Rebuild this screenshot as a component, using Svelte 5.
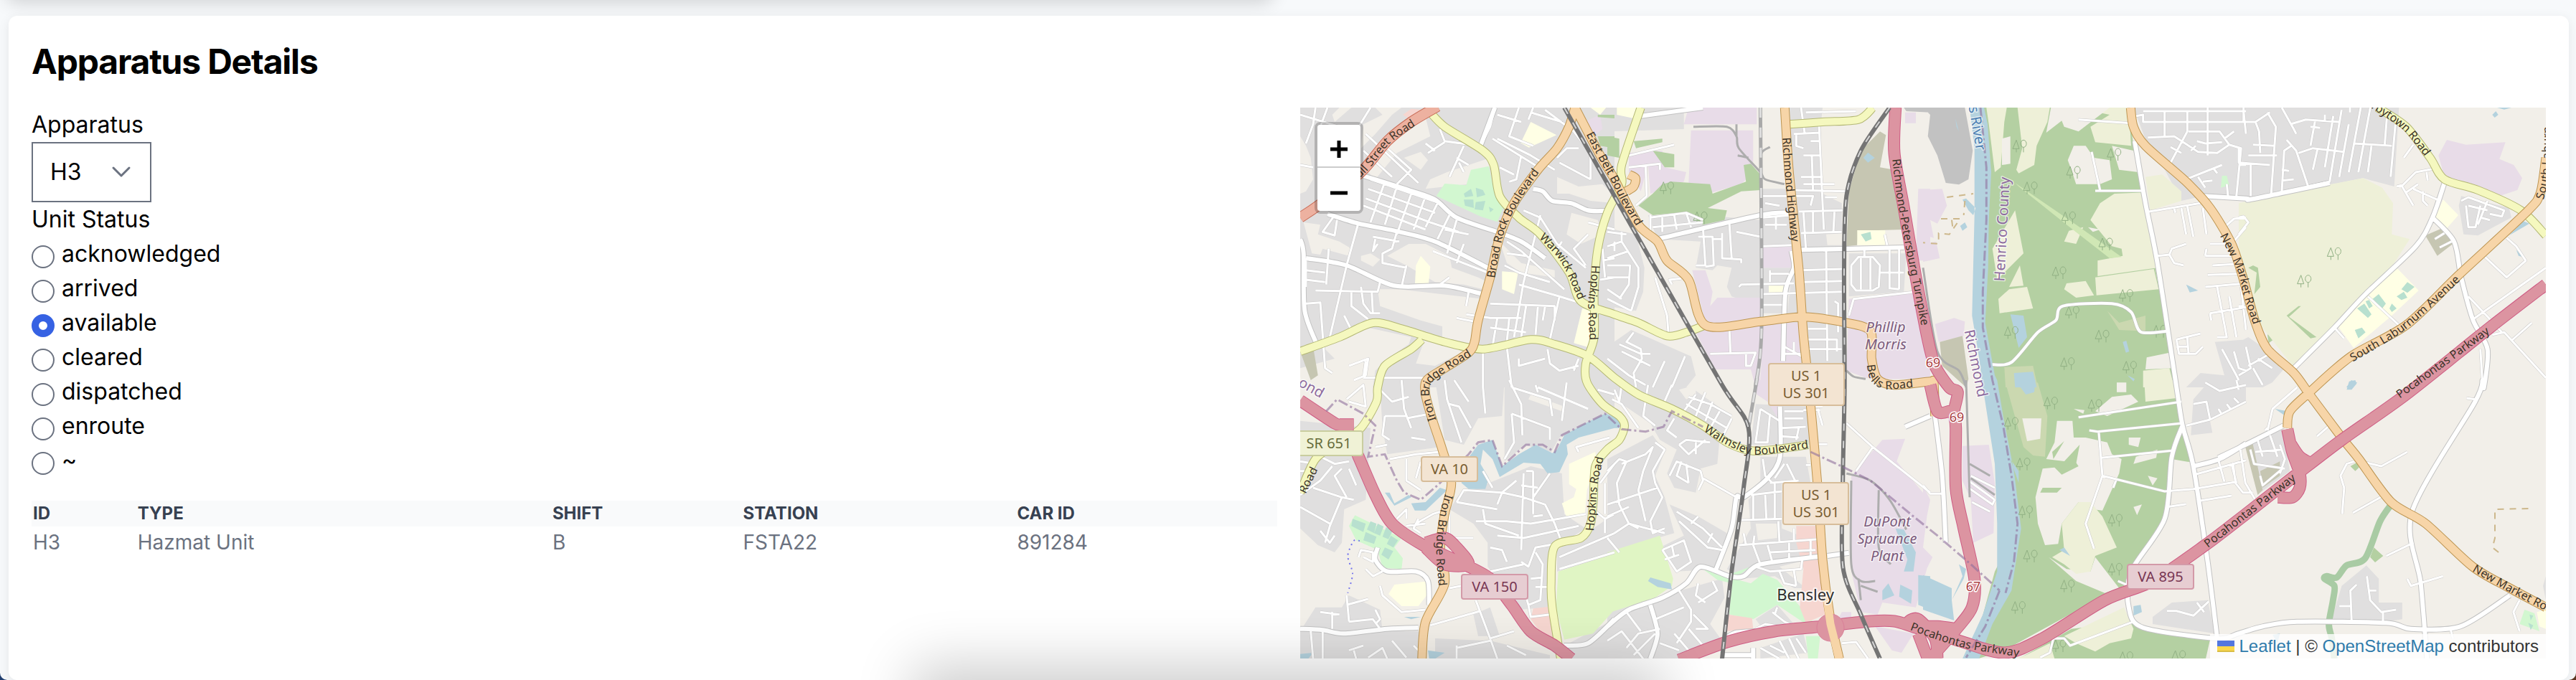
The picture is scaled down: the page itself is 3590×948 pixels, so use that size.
<script>
  const statuses = ['acknowledged', 'arrived', 'available', 'cleared', 'dispatched', 'enroute', '~'];
  const units = [{ id: 'H3', type: 'Hazmat Unit', shift: 'B', station: 'FSTA22', car: '891284' }];
  let apparatus = $state('H3');
  let status = $state('available');

  // The survey is split in eight sheets; each holds its origin and its scale.
  const sheets = {
    A: [1800, 140, 3], B: [2240, 140, 3], C: [2680, 140, 3], D: [3120, 140, 3],
    E: [1800, 530, 3], F: [2240, 530, 3], G: [2680, 530, 3], H: [3050, 530, 2.904]
  };

  function points(line, start) {
    let key = start;
    const list = [];
    for (const token of line.trim().split(/\s+/)) {
      if (sheets[token]) { key = token; continue; }
      const [x, y] = token.split(',').map(Number);
      const [ox, oy, sx] = sheets[key];
      list.push([ox + x / sx, oy + y / 3]);
    }
    return { list, key };
  }
  const f = (n) => n.toFixed(1);

  function trace(source, mode) {
    let key = 'A';
    let d = '';
    for (const line of source.split(';')) {
      if (!line.trim()) continue;
      const r = points(line, key);
      key = r.key;
      const p = r.list;
      d += `M${f(p[0][0])} ${f(p[0][1])}`;
      for (let i = 1; i < p.length; i++) {
        if (mode === 'curve') {
          const a = p[i - 2] ?? p[i - 1], b = p[i - 1], c = p[i], e = p[i + 1] ?? c;
          d += `C${f(b[0] + (c[0] - a[0]) / 7)} ${f(b[1] + (c[1] - a[1]) / 7)} ${f(c[0] - (e[0] - b[0]) / 7)} ${f(c[1] - (e[1] - b[1]) / 7)} ${f(c[0])} ${f(c[1])}`;
        } else d += `L${f(p[i][0])} ${f(p[i][1])}`;
      }
      if (mode === 'area') d += 'Z';
    }
    return d;
  }

  const areas = [
    ['#e0dfdf', `A 36,30 1350,30 1350,1200 36,1200;
      B 0,30 320,30 320,120 0,130; B 30,540 120,560 155,700 150,800 120,880 0,860 0,540; B 170,480 400,480 640,500 640,860 520,820 500,780 520,700 460,690 440,710 370,700 390,590 210,580;
      B 650,370 860,370 980,430 990,1100 730,1100 780,640 650,610; B 760,30 900,30 890,130 900,380 780,370; B 1010,640 1250,640 1240,800 1010,820; B 650,700 780,700 740,890 650,890;
      B 0,1030 100,960 350,1070 370,1150 330,1200 0,1200;
      C 880,30 1350,30 1350,400 1170,400 1080,420 1000,270 940,190; C 1220,1010 1350,1000 1350,1200 1100,1200 1160,1140 1260,1150;
      D 0,30 670,30 650,360 520,325 200,390 0,410; D 0,1010 40,990 140,1060 200,1110 140,1180 100,1200 0,1200; D 930,400 1130,450 1140,490 1000,565 940,560 920,440;
      E 36,170 330,200 310,500 220,540 210,680 180,720 110,690 36,620; E 370,30 530,0 600,190 620,280 400,310 380,200; E 600,0 890,0 880,150 780,160 720,270 640,250;
      E 890,0 1350,0 1350,170 1120,240 1080,310 980,270 890,340; E 700,480 1000,360 1130,390 1140,560 1230,620 1100,700 1070,950 950,960 820,780 820,680 760,600 660,540; E 100,950 210,950 240,900 370,960 380,1050 540,1050 540,1165 36,1165 36,1050; E 600,1080 830,1090 1080,1150 1080,1165 600,1165; E 1260,620 1350,560 1350,730 1110,800 1110,710; E 760,980 830,950 870,1070 780,1070; E 1160,1100 1350,1000 1350,1165 1140,1165;
      F 0,30 120,30 350,30 520,150 470,240 460,350 390,370 370,470 280,450 250,390 290,290 220,250 180,180 60,100; F 0,330 190,230 240,300 200,400 240,490 280,640 0,720; F 260,520 380,570 500,640 470,790 290,800 220,700 320,650; F 620,100 840,110 850,270 600,270; F 640,320 830,320 850,430 730,430 730,620 880,680 880,740 720,780 830,870 780,870 700,820 560,830 500,790 560,690 600,620 590,500 640,450; F 0,950 200,910 480,830 490,910 430,1020 480,1090 300,1165 0,1165; F 620,1000 710,940 780,1020 650,1040; F 640,1120 820,1060 840,1140 640,1165;
      G 1130,80 1200,0 1350,0 1350,90 1200,170 1210,220 1120,230; G 960,990 1040,930 1190,920 1220,1060 960,1020;
      H 240,260 380,200 410,380 290,470 260,380; H 580,1000 620,860 720,775 770,830 770,930 865,930 865,1000 800,1010; H 1435,860 1446,820 1446,920`],
    ['#f2efe9', `A 200,30 250,30 180,90 170,60; A 350,30 460,30 420,60 350,140 290,200 300,100 380,60; A 440,140 560,70 580,150 440,220 350,330 320,300; A 470,240 540,215 570,250 540,290;
      A 580,330 650,300 830,240 840,270 740,350 560,370; A 36,150 60,190 80,240 90,330 60,380 36,390; A 50,510 120,520 110,560 200,590 250,620 240,650 130,620 120,645 85,640; A 290,650 330,640 370,665 340,695 290,670;
      A 400,650 490,600 560,600 660,650 670,700 780,740 820,760 800,790 720,770 600,760 480,690; A 360,790 450,790 800,830 770,960 760,1020 630,990 630,945 540,920 370,860;
      A 120,1020 320,950 500,990 490,1020 400,1080 350,1130 340,1200 36,1200 36,1120 180,1080; A 560,990 750,1040 720,1050 600,1110 520,1100; A 870,590 960,680 1100,710 1100,740 960,720 900,680;
      A 1110,320 1200,360 1300,350 1350,400 1350,430 1250,420 1160,390 1110,390; A 1170,470 1280,500 1300,560 1210,600 1150,560;
      B 915,560 985,555 980,605 920,605; F 300,40 370,20 370,60 330,80; F 620,600 710,600 710,660 630,670; E 1000,60 1140,110 1130,130 990,80; D 270,520 310,420 380,430 330,500 290,540; D 0,480 60,440 110,500 80,550 40,520`],
    ['#e8dce8', `B 340,30 625,30 625,100 320,100; B 350,125 610,125 610,300 560,350 420,390 410,350 340,345; B 90,220 230,210 240,280 330,300 320,340 180,390 170,270 140,380 90,300; B 355,710 410,710 440,800 430,860 460,825 640,825 640,1200 620,1200 600,1125 450,1125 370,970 410,930; B 650,610 770,610 770,700 650,700; B 650,920 800,930 810,1100 640,1200; B 1010,830 1300,800 1350,1080 1350,1165 1140,1165 1080,1160 1000,1130; B 1300,370 1350,370 1350,670 1290,670; B 1245,50 1290,50 1290,95 1245,95; A 1200,100 1290,60 1300,120 1250,160;
      C 0,375 80,370 100,440 60,515 30,500 45,575 0,560; C 0,600 55,590 70,660 0,675; C 50,935 130,910 175,925 170,985 65,1010;
      D 870,165 950,185 1115,175 1090,245 1150,270 1185,325 1165,375 1090,400 860,320 835,230;
      F 620,0 720,0 720,170 670,90 625,60; F 1150,250 1245,245 1210,340 1345,500 1320,700 1350,740 1290,950 1150,930 1130,980 1060,970 1020,800 1020,400; F 980,970 1020,970 1020,1000 960,1010; F 1120,1030 1280,1060 1230,1140 1190,1130; G 165,275 275,270 300,430 295,640 210,680 200,500 165,420; G 0,440 30,500 0,650; G 0,700 40,740 0,820`],
    ['#b4d0a2', `B 270,340 430,350 440,390 580,340 570,270 600,265 640,310 640,375 560,380 420,450 500,460 490,500 400,520 350,480 290,470 190,480 130,440 190,390 230,350; B 110,170 230,160 230,175 120,200; B 190,210 280,225 280,280 240,280; A 1280,60 1350,60 1350,75 1280,70; A 1280,150 1350,150 1350,200 1290,190; B 0,150 50,160 50,240 0,230;
      C 250,30 860,30 880,190 1060,1200 G 1085,190 1130,345 1040,330 1010,590 870,800 860,850 760,900 340,1130 230,1165 200,1165 300,800 400,600 330,150 C 290,1200 250,920 260,100;
      D 625,470 625,560 500,635 420,645 270,780 210,740 240,700 300,660 340,660 370,600 410,630 480,630 465,595 510,540 600,500 600,470; D 400,755 430,770 450,735 450,790 500,820 340,950 290,890 330,850 325,820; D 100,680 120,660 110,620 135,605 150,665 120,685; D 120,980 140,965 160,990 125,1015; D 600,700 625,690 600,730; D 380,670 435,715 425,720;
      G 400,1165 620,1040 870,1010 920,1040 1200,1085 1182,1165; H 0,1060 70,1080 70,1165 0,1165; H 655,360 680,345 690,365 675,380; H 750,700 788,735 755,762 735,740`],
    ['#eef0d8', `C 265,30 350,30 340,90 325,280 300,300 275,100; C 395,30 530,30 520,90 475,190 465,270 400,305 390,290 415,200; C 640,30 860,30 870,190 720,175 700,110 780,60; C 740,430 800,390 930,385 980,700 730,735 730,670 835,650 830,620 790,610 700,500; C 720,740 965,705 985,790 725,815; C 385,460 420,640 310,750 290,620; C 405,690 420,775 360,780; C 315,830 360,790 435,780 460,870 320,890; C 590,790 600,765 680,755 715,815 640,825; C 920,1130 1030,1120 1050,1200 920,1200; C 610,545 670,530 640,600 590,590; C 930,320 1000,310 1080,380 1080,420 950,460;
      D 0,430 130,400 520,325 600,365 645,430 640,560 715,580 650,680 400,950 225,1110 60,900 0,640;
      G 925,0 1060,0 1060,75 930,90; G 590,1070 840,950 880,1040 870,1080 780,1100 720,1135 640,1100; G 430,1150 530,1100 550,1165 390,1165`],
    ['#f2efe9', `C 535,30 780,30 650,130 590,110 580,85 515,135; C 605,250 630,190 680,190 715,240 780,250 790,330 740,350 640,350 620,290; C 790,190 880,210 900,300 820,290; C 330,160 365,150 365,265 330,270; C 935,1075 1030,1055 1040,1120 930,1125; C 690,530 740,540 710,550;
      G 560,170 625,170 630,240 680,240 770,260 790,310 830,330 820,390 750,545 710,540 650,510 580,600 565,685 510,690 480,600 470,490 500,370 550,365 580,395 650,360 640,345 515,330 550,260; G 415,160 495,160 490,245 435,255; G 790,70 870,60 900,90 770,150 720,130; G 525,740 600,790 700,800 720,740 820,870 760,890 640,840; G 1040,480 1130,460 1180,700 900,770 1010,590; G 860,240 910,240 900,280 860,270; G 940,400 980,410 960,440; G 880,530 915,520 895,565; G 630,120 675,125 670,140; G 810,10 850,10 850,50 810,50; G 890,320 980,290 975,325 880,350`],
    ['#eef0d8', `G 580,600 650,510 700,510 750,570 810,700 720,735 700,800 640,810 590,770 540,740 590,710`],
    ['#b4d0a2', `G 540,300 590,255 545,330; G 590,340 655,270 640,350 590,360; G 500,450 580,450 560,470 490,470; D 250,860 260,860 210,905 325,990 300,995 200,900; D 60,690 80,700 90,780 65,810 75,720 40,700`],
    ['#d0e7b5', `C 385,345 640,520 830,655 780,660 600,520 400,360`],
    ['#cbd8b0', `G 350,30 480,10 520,150 510,320 460,315 420,280; C 340,1115 460,1110 480,1200 345,1200; C 770,880 820,930 930,900 930,965 820,960`],
    ['#f2efe9', `G 415,160 495,160 490,245 435,255`],
    ['#c6c6b2', `B 1060,210 1140,130 1165,145 1140,280 1200,290 1240,540 1050,545 1045,605 1000,610 1010,380; C 70,1010 165,985 190,1165 180,1200 80,1110; D 780,565 860,530 895,600 830,650; A 36,1050 90,1030 110,1150 80,1170; H 230,280 260,265 300,460 280,480; H 290,380 370,340 370,400 300,450`],
    ['#c2c2c2', `C 0,30 175,30 208,210 190,330 150,352 95,345 60,230 20,150 30,60; B 1240,30 1350,30 1350,50 1250,45`],
    ['#d2f7d0', `A 640,348 730,355 750,290 825,275 850,400 885,450 860,508 790,485 605,400; F 400,790 490,820 600,780 530,830 600,850 650,810 710,835 860,1010 830,1020 710,940 610,1000 510,980 520,850 460,835; F 830,1070 890,1070 880,1165 840,1165; C 1250,315 1270,315 1280,355 1245,365; E 265,565 460,660 430,700 465,745 460,790 380,785 360,710 270,670 240,610; H 1360,960 1400,975 1420,1050 1340,1020`],
    ['#e0f5c4', `E 1115,800 1350,725 1350,960 1260,1060 1140,1085 1105,950; F 0,720 220,650 275,830 270,860 200,910 0,975`],
    ['#b8e0cf', `A 770,365 800,375 810,395 775,405; A 720,390 750,370 760,400 725,405; A 720,415 760,415 762,450 725,440; A 770,425 810,420 800,460 765,455; A 825,445 845,455 830,468;
      B 1060,560 1100,550 1105,580 1080,590; D 680,790 705,760 735,780 705,805; D 495,870 525,850 555,895 540,910; D 530,840 545,835 560,860 545,870; D 560,830 585,810 615,850 600,870; D 660,820 690,800 705,825 680,835; D 630,870 640,850 660,870 640,885; D 485,960 515,950 530,970 500,995;
      E 255,580 310,600 300,635 250,610; E 330,590 355,600 345,640 315,625; E 360,600 385,612 370,650 345,640; E 395,615 425,625 405,665 380,655; E 310,635 355,655 345,685 300,670; E 415,650 445,670 425,700 398,685; E 390,700 425,715 405,750 375,730; H 1380,980 1395,985 1385,1005; H 1375,1015 1395,1025 1385,1045`],
    ['#ffffe5', `A 1000,90 1108,145 992,197 958,178; A 540,650 580,695 573,765 516,765 520,690; A 880,715 947,720 930,810 880,790; A 1215,870 1280,880 1250,1035 1180,1015; B 40,30 120,30 110,75 40,60; B 1045,543 1162,543 1162,605 1045,605; B 675,775 740,775 735,803 675,803; A 1250,30 1315,30 1290,60;
      D 855,415 918,480 870,535 820,490; D 660,700 752,795 640,900 480,1035 415,945 530,820; E 1160,350 1270,300 1275,340 1235,460 1225,570 1150,575 1130,515 1180,490 1190,455 1160,435; E 430,855 560,842 565,900 530,945 460,945 405,895; H 1410,970 1446,960 1446,1040 1420,1030`],
    ['#b8e0cf', `B 1060,560 1100,550 1105,580 1080,590; D 680,790 705,760 735,780 705,805; D 495,870 525,850 555,895 540,910; D 530,840 545,835 560,860 545,870; D 560,830 585,810 615,850 600,870; D 660,820 690,800 705,825 680,835; D 630,870 640,850 660,870 640,885; D 485,960 515,950 530,970 500,995`],
    ['#f6d6d0', `E 1010,955 1070,948 1110,1100 1060,1080 1000,1000; A 465,60 500,35 550,40 490,75; F 790,610 870,610 900,800 910,980 830,1015 805,950 820,790 790,680; F 505,980 605,995 610,1040 500,1050`],
    ['#b4d2de', `C 195,30 215,200 215,480 205,900 235,1080 250,1200 G 255,60 300,350 310,600 310,800 250,980 165,1165 235,1165 290,1020 370,880 410,620 380,380 335,150 310,0 C 300,1150 260,930 272,700 275,500 285,300 270,100 255,30;
      C 165,415 180,410 220,450 210,480 190,460; C 155,525 175,510 185,530 165,545; C 365,895 420,900 435,990 400,1035; C 380,1140 460,1135 475,1200 385,1200; C 835,1010 850,1005 862,1050 848,1055; C 855,1150 885,1165 880,1175; C 1100,770 1150,795 1115,803; B 1070,240 1090,218 1118,240 1090,260; C 135,75 150,130 140,110;
      D 1130,565 1190,505 1215,515; D 1160,625 1188,655 1170,650; D 450,1200 470,1170 495,1180 480,1200; D 1060,60 1075,45 1085,60 1070,72; D 1080,30 1140,30 1110,38;
      E 735,330 780,270 840,250 880,360 950,310 1020,270 1090,305 1110,290 1140,230 1230,180 1310,140 1380,160 F 60,170 50,200 E 1350,200 1200,240 1150,270 1155,310 1120,385 1070,390 1040,350 970,345 870,405 840,330 800,290 790,350 825,410 810,455 740,455 710,430; E 500,515 560,510 620,450 650,460 560,545 515,545; E 390,470 430,525 500,490 490,480 430,515 410,470; E 470,990 540,990 500,1000; E 570,1130 640,1140 600,1165 575,1165; E 36,1145 90,1140 70,1165 36,1165;
      F 170,840 180,825 265,850 270,875 210,865; F 1205,620 1240,625 1290,720 1280,800 1240,800 1255,750; F 1150,880 1175,850 1200,900 1150,920; F 1225,855 1275,880 1270,935 1220,905; F 1300,815 1350,820 1350,960 1300,940; G 0,815 120,870 120,920 130,1005 0,960; G 120,920 165,820 150,770 180,790 170,830; G 385,0 470,0 465,50 430,60; G 365,330 400,380 400,430; G 570,710 590,700 615,735; G 880,945 910,940 915,970 880,985;
      H 350,120 400,130 385,145; H 640,40 650,5 675,0 680,15 660,40; H 340,1065 370,1060 360,1100`]
  ].map(([fill, src]) => ({ fill, d: trace(src, 'area') }));

  const streets = trace(`A 60,180 90,100 100,30; A 36,60 200,110; A 150,30 120,110; A 250,160 330,30; A 300,210 420,320; A 310,140 530,345; A 400,200 500,290 440,350; A 36,270 90,280;
    A 620,120 640,170 780,190; A 560,180 600,210; A 640,175 570,220; A 720,190 660,320; A 690,240 740,270; A 700,260 720,300; A 850,30 830,110 790,190; A 860,60 960,90; A 950,30 910,150 1010,190; A 1010,30 990,80; A 860,160 1000,230 1100,290; A 1000,50 1130,90; A 1060,40 1180,130 1250,220 1250,330; A 840,160 1050,290; A 1110,240 1150,200 1200,200; A 1120,260 1250,330; A 960,230 940,330 910,340; A 870,280 930,310;
    A 260,340 230,400; A 330,330 620,430; A 320,370 600,470; A 310,410 580,510; A 300,440 560,540; A 390,340 330,510; A 440,360 390,520; A 500,390 440,560; A 560,400 510,540; A 610,430 560,530; A 660,480 610,580; A 690,500 650,640; A 720,600 690,680; A 640,540 740,560; A 590,630 820,720; A 580,510 700,550;
    A 280,510 230,690 160,990; A 180,480 130,550 180,565 190,500; A 340,570 450,590; A 350,580 340,630 360,600; A 440,550 420,620 380,640 380,680 480,700; A 480,690 460,780; A 60,670 60,780; A 60,710 140,720; A 60,750 140,760; A 155,620 145,770; A 100,795 360,800 370,760; A 250,800 250,860 320,915; A 290,780 300,850 330,890 370,890; A 335,800 340,890; A 60,850 120,845 140,1120 170,1140; A 220,900 250,960; A 620,770 660,740;
    A 900,590 960,630 1140,790; A 1040,480 970,760 930,990; A 970,460 1040,490 1110,600 1230,700; A 900,640 980,650; A 890,690 950,720 1080,760; A 950,770 1120,820 1250,860; A 830,850 1100,860 1100,920; A 820,910 960,910; A 830,950 980,970; A 860,910 840,1030; A 910,910 900,1010; A 980,860 960,990; A 1030,860 1020,980; A 1060,860 1050,920; A 1120,820 1080,1000; A 740,800 730,860; A 690,910 790,930; A 730,895 830,910; A 1130,590 1100,640; A 1240,560 1180,620 1230,690; A 1300,670 1350,660; A 1290,750 1350,740; A 1240,510 1350,540; A 1300,620 1310,740;
    A 300,1160 600,1160; A 310,1090 300,1160; A 240,1110 320,1080 310,1150 E 260,0; A 900,1030 920,1200; A 950,1080 950,1110 1060,1080; A 1070,1040 1080,1100 1120,1130 1200,1110; A 1180,1130 1200,1080; A 800,1050 800,1200 E 810,140; E 910,0 960,100 965,230;
    B 180,480 180,560; B 180,490 330,470 400,500; B 230,480 230,550; B 280,480 290,540; B 330,470 350,530; B 190,530 400,510; B 400,530 410,690 370,690; B 380,570 440,570 445,690 410,695; B 510,510 520,660; B 480,555 480,660 560,665 560,680; B 540,550 640,570; B 445,580 480,580; B 550,780 560,770 780,765; B 510,950 515,1060; B 430,1060 620,1055 600,1110 580,1110 580,1060; B 90,230 280,185; B 90,280 220,265 220,290; B 160,270 165,400 120,440; B 200,740 250,900 255,970; B 270,770 260,750 310,745;
    B 650,400 860,400 850,440; B 660,430 720,440; B 650,490 770,480; B 660,520 750,520; B 705,490 705,540; B 650,810 980,800; B 650,855 730,855; B 680,710 680,760; B 680,725 760,725;
    B 780,140 890,135; B 790,140 790,190 820,200; B 810,30 825,135; B 885,100 905,540; B 850,170 890,170; B 820,230 895,230; B 855,230 860,380; B 810,320 900,320; B 780,375 1000,380; B 820,350 950,350; B 910,405 960,405; B 800,465 985,460; B 820,465 830,620; B 860,465 860,550; B 950,460 945,550; B 810,555 980,550; B 915,630 920,1090; B 810,710 985,705; B 810,760 985,755; B 830,1000 960,1000 960,1050; B 830,1040 980,1040; B 840,955 920,955; B 740,1030 830,1080; B 740,1060 810,1060; B 780,1010 780,1060; B 950,840 965,850 965,970; B 830,50 1040,45;
    B 1020,690 1050,655 1110,655 1140,690 1135,780 1110,795 1040,795 1020,770 1020,690; B 1060,660 1060,790; B 1100,660 1100,790; B 1075,625 1075,655; B 1180,625 1180,790; B 1140,720 1240,720; B 1220,620 1220,790; B 1180,785 1220,790; B 1160,560 1170,605; B 1010,900 1030,830 1290,800; B 650,610 770,605;
    B 0,610 60,590; B 0,550 80,560; B 60,550 60,590 130,700 130,780 100,880; B 0,660 90,630; B 30,590 30,630; B 0,690 95,690 90,770 50,830; B 0,740 90,740; B 0,790 60,830; B 0,830 100,880;
    B 50,1020 140,1060 180,1060; B 60,1050 180,1110; B 110,970 80,1010 140,1040 145,1080 110,1140 120,1200; B 0,1080 90,1150 160,1190; B 240,1090 190,1200; B 325,1070 270,1200;
    F 20,80 60,100 130,200; F 60,20 50,90 30,40; F 170,20 150,150 200,190; F 270,20 230,110; F 370,60 320,130; F 340,70 430,100 520,150; F 410,50 370,150; F 440,90 410,170; F 470,130 430,200; F 330,100 500,200; F 520,160 470,260; F 280,160 250,210 290,240; F 300,270 330,250 430,260; F 300,270 340,310 410,250; F 370,250 370,310; F 260,400 290,340 390,380 400,420 380,460; F 310,340 290,400 340,430; F 330,350 340,430; F 400,410 540,490;
    F 0,380 50,330 80,340 40,430 50,520 90,600; F 60,350 160,310 190,280 150,380 130,460 160,590; F 200,260 240,290 190,380 200,430 230,490 180,590 190,640 240,620; F 0,520 210,450; F 0,570 90,530; F 90,600 240,640; F 0,660 50,720; F 30,640 90,600 130,620;
    F 290,550 400,620 480,700; F 350,600 380,570; F 300,590 420,700 480,710; F 420,680 440,640; F 230,710 320,670 350,760 290,800 230,710; F 240,750 300,730; F 270,690 280,740;
    F 80,970 140,1050; F 0,1090 60,1050 150,1165; F 300,880 350,960 350,1010 290,1100; F 380,850 370,900 410,930; F 380,930 460,880 440,840; F 360,980 420,1040 370,1040; F 200,1000 320,950; F 80,1120 130,1060 220,1040; F 110,1150 200,1060; F 220,1100 300,1130; F 280,1060 340,1130; F 340,1040 400,1110;
    F 640,120 720,170; F 640,120 620,260 670,260 680,140; F 740,130 820,130; F 740,160 820,160; F 730,200 830,195; F 800,200 790,250; F 730,235 800,240; F 650,330 660,400 690,430; F 750,350 790,430; F 740,350 700,410; F 680,430 800,420; F 600,480 730,465; F 610,480 610,580; F 660,480 665,580; F 700,430 700,580; F 560,585 730,580; F 550,690 880,665; F 570,640 580,690; F 615,650 610,690; F 715,590 720,680; F 780,620 780,670; F 610,690 640,770; F 670,690 690,760; F 760,680 760,750; F 850,670 850,740; F 680,720 870,710; F 620,780 680,800 810,790 815,750; F 720,800 740,850 790,860; F 780,795 790,860; F 690,970 740,1010 780,1030; F 710,950 700,980; F 620,1040 660,1020 720,1030; F 640,1120 720,1165; F 680,1110 740,1140; F 720,1090 760,1165; F 760,1080 800,1165; F 790,1080 830,1140; F 880,120 900,190; F 820,125 890,125; F 860,268 920,268; F 870,110 900,110; F 830,355 850,355; F 980,1100 1040,1095 1090,1165; F 1000,180 1110,280 1350,470; F 1110,280 1040,380;
    E 230,80 300,20 310,110 240,90; E 460,0 470,120 500,200; E 370,40 420,90 490,70; E 480,160 580,140; E 390,150 380,230 410,250; E 390,150 480,150; E 500,240 560,250; E 350,280 400,270; E 640,0 650,80 710,260; E 680,0 740,90; E 660,100 700,110 750,200; E 920,30 1080,80 1090,150; E 920,140 1080,200 1080,250; E 1020,20 1030,50; E 1030,30 1240,120; E 1150,10 1130,170; E 1280,40 1350,60; E 890,330 930,260 920,140; E 410,330 520,310 620,300; E 480,330 480,420 540,460; E 540,340 520,410; E 1200,300 1190,280 1330,240;
    E 800,380 840,450; E 690,510 720,460 880,470 970,490 1060,520 1100,600 1130,680; E 860,520 880,470 940,420; E 970,390 960,710; E 1010,380 1010,560; E 980,380 1010,380; E 1080,390 1010,490; E 770,590 900,590 1000,600 1230,560; E 800,540 810,600 950,650; E 860,650 970,660 1200,610; E 690,510 860,540; E 660,560 660,660 760,660; E 1010,570 1050,565; E 960,440 1030,450; E 830,700 880,710 900,760; E 830,800 970,770; E 960,760 990,780 1020,700 1130,680; E 970,870 990,940 1000,990 1080,980; E 1020,720 1050,770 1040,920 990,940; E 1000,830 1050,825; E 1020,865 1080,865; E 1120,740 1350,640; E 1120,790 1350,720; E 1260,540 1310,580 1310,640; E 1310,580 1350,560; E 1290,430 1350,350; E 1310,430 1310,560;
    E 36,340 100,350; E 36,380 90,380; E 120,320 180,350 240,340; E 170,360 120,420 36,480; E 90,450 210,490 260,500; E 210,370 180,400 230,490; E 240,370 270,440; E 36,530 160,600; E 120,630 160,680 180,650; E 210,490 160,610 140,680;
    E 280,740 290,710 340,720 340,760 300,740; E 310,790 340,820 380,800; E 370,860 380,900 460,970 560,960; E 520,600 590,560 620,550; E 440,580 480,540 480,580; E 480,610 560,600; E 530,580 510,620 540,640; E 660,870 710,860;
    E 230,900 240,1010; E 230,940 320,915; E 120,970 200,980; E 170,970 170,1040; E 240,1010 340,1000 370,1040; E 350,960 370,1000 350,1020; E 770,920 830,1080 860,1165; E 580,1025 790,965; E 830,1080 930,1050; E 690,1120 830,1090; E 80,1050 90,1165; E 130,1050 130,1165; E 240,1130 300,1110; E 260,1130 270,1165; E 320,1160 380,1120 400,1165; E 420,1090 480,1160; E 690,1110 690,1165; E 900,1110 980,1150; E 510,1110 530,1130;
    C 920,45 1350,45; C 890,65 920,60 920,90 1350,90; C 1010,45 1010,150; C 1105,45 1105,130 1030,270; C 1190,30 1190,230; C 1340,45 1350,140; C 940,155 1050,150 1150,215 1230,220 1280,185 1240,130 1110,130; C 1035,195 1080,220; C 1120,210 1140,190; C 1145,170 1180,180 1250,175; C 1260,160 1300,130; C 1280,185 1330,200 1310,400; C 1320,270 1350,270; C 1100,330 1250,270; C 1150,320 1180,365; C 1170,340 1210,335; C 1215,285 1230,305; C 1270,350 1275,400;
    C 650,80 870,95; C 705,215 740,375; C 720,378 920,378; C 945,465 1160,430; C 1050,450 1055,470; C 1080,450 1100,560; C 1105,440 1130,570; C 1170,450 1185,560; C 980,650 1030,645 1040,620 1100,600; C 1030,645 1050,680 1090,690; C 1260,530 1300,495 1350,490; C 1350,530 1290,600; C 1200,600 1270,600; C 1180,650 1290,650; C 1185,620 1180,650; C 1210,690 1300,685; C 1190,730 1320,725; C 1180,780 1350,765; C 1230,780 1270,990 1230,990; C 1280,820 1310,990; C 1200,890 1350,865; C 1200,890 1205,920; C 1060,1000 1160,975; C 1060,1000 1070,1060 1140,1060 1170,1030; C 1105,990 1110,1060; C 1060,1030 1110,1030; C 1250,1040 1310,1150 1320,1170; C 1300,1050 1320,1120 1350,1130;
    D 20,30 20,90; D 0,90 70,90 85,130 90,220; D 70,90 130,50; D 120,50 155,110 135,400; D 0,200 0,260 130,270; D 50,270 50,400; D 60,185 150,190; D 40,230 160,230; D 180,30 230,120 240,140; D 215,100 280,80 420,90; D 320,80 300,190; D 300,110 340,115; D 360,60 360,90; D 200,165 240,210 290,360; D 180,380 190,210 220,190; D 250,220 310,200 440,215; D 395,65 360,280; D 430,40 380,340 290,360; D 330,200 310,290; D 460,100 420,320; D 510,30 460,300; D 550,30 500,300; D 555,190 540,300; D 620,60 610,190; D 655,100 635,320; D 480,180 640,190; D 465,30 465,50; D 180,335 230,330; D 180,290 210,295;
    D 660,360 680,355 730,440; D 680,360 740,300 820,285; D 700,385 750,350; D 730,370 830,415; D 770,380 770,420 790,440; D 785,300 790,335; D 730,185 690,240; D 930,420 960,405 1110,460 1100,485 1050,475; D 950,440 960,530 990,530 1010,440; D 1040,420 1000,520; D 960,440 1040,460; D 1010,490 1050,500; D 820,580 860,555; D 840,615 890,590; D 540,820 670,940; D 400,950 440,995; D 1120,575 1160,610 1200,670 1120,740 1030,655; D 960,820 1050,915 1100,970; D 980,915 1284,700; D 1060,980 1110,970 1284,1160; D 1140,1005 1225,930; D 1010,1040 1020,1200; D 0,490 20,485 40,510 0,560; D 0,860 20,860; D 10,780 30,960;
    D 30,1030 50,1120 0,1150; D 80,1080 140,1120; D 130,1060 40,1110; D 60,1120 100,1190;
    G 0,440 30,475 80,475; G 650,155 1080,90; G 695,210 730,215 1085,180; G 735,220 750,400 680,600 715,705; G 745,325 1040,295; G 750,400 1010,465 1130,455; G 810,410 795,450; G 1020,530 1100,518; G 765,905 860,860 815,840; G 1135,395 1350,335; G 1130,455 1310,425; G 1155,505 1290,483; G 1235,335 1260,425; G 1290,350 1310,430; G 1100,190 1200,165 1350,90; G 1130,100 1185,90 1200,165; G 1235,120 1250,145; G 1270,100 1285,120; G 1300,75 1320,95; G 1180,10 1240,45 1350,20; G 1310,0 1320,40; G 880,1010 615,1110 590,1080 545,1080 530,1140 490,1160; G 1020,965 1060,965 1130,985 1195,925; G 1145,930 1175,970;
    G 190,420 300,500; G 190,450 290,520 300,500; G 200,400 300,450; G 205,510 280,550;
    H 320,210 340,120 440,30; H 210,290 230,430 270,500; H 250,290 265,350 390,370; H 280,250 300,320; H 330,230 360,320; H 370,270 390,330 370,390; H 290,400 300,440 380,370; H 270,300 380,290; H 310,210 320,200; H 180,345 190,430 220,470 260,470; H 520,235 570,190; H 670,340 640,350 615,400 630,450 622,560; H 700,340 780,360 850,320 885,300; H 665,555 785,485; H 800,735 910,680; H 1125,75 1160,80; H 885,830 900,860 1030,820; H 680,855 655,880 660,1010; H 610,945 655,945; H 722,820 735,920 780,970 840,960; H 730,880 760,880; H 787,970 787,1010; H 1340,920 1315,970 1340,1050; H 1060,1040 1070,1080`, 'line');

  const minor = trace(`A 36,580 50,640 55,880 110,1030; A 60,660 230,690 430,775 640,775 800,810; A 150,475 280,515 430,545 600,590 820,700; A 300,315 490,375 600,415 690,490 860,550; A 1010,370 1050,380 1090,420 1170,430 1240,460 1310,462; A 850,30 790,190; A 860,550 960,590 1060,660;
    B 140,65 400,30; B 210,580 640,480 770,470; B 810,625 1240,615; B 770,630 780,700 745,800 735,1090; F 722,110 722,320 670,410 570,490 540,490 520,620 455,790; F 0,1030 90,960 230,910 330,850 390,780 510,820 570,820 640,770 880,738; F 180,940 210,1060 180,1165; F 500,1075 540,1055 620,1050; F 480,1150 610,1150; F 610,1120 610,1165; F 920,735 1010,722; F 1245,195 1350,150; E 36,1040 130,1045 220,1060 400,1040 530,1035; E 360,700 350,750 400,800 520,800 570,840 575,940; E 1140,1110 1240,1100 1350,1000; F 30,1000 0,1030;
    C 885,170 930,430 980,680 1060,1200 G 1085,190 1130,360 1190,760 1230,1080; G 1085,190 1040,320 1010,580 870,800 860,950 920,1035 1230,1080 H 200,1060 300,1030 440,1010 800,1015 900,1040 1100,1030 1300,900; C 1170,400 1350,410 D 60,412 380,345; G 50,150 80,400 95,680; G 1130,360 1240,330 1350,265; H 120,325 250,260 385,190;
    D 860,345 810,490 740,610 530,810 400,950 225,1125; D 810,490 900,590 930,740 980,920 1040,1040 1025,1200 H 1190,0 1160,90 905,550 940,850 965,1165`, 'curve');

  const lane = trace(`C 290,1105 370,1095 480,970 555,920 585,860 790,850 870,885 910,968 1020,965`, 'curve');

  const roads = [
    { fill: '#f5f8bf', edge: '#b3b774', w: 10, d: trace(`A 36,1050 200,990 340,930 460,955 640,1010 800,1040 1000,1000 1100,1020 1240,1070 1350,1160 F 130,60 270,120 400,190 500,260 600,295 700,290 840,270;
      A 580,50 640,110 800,210 845,270 870,400 950,490 1040,560 1160,720 1210,840 1350,895 B 130,930 250,985 330,970 410,940; B 140,30 60,270 60,350 0,470 A 1280,620 1265,800 1265,990 1230,1100 E 1235,10 1300,100 F 50,150 72,190 50,250 0,290 E 1270,360 1262,500 1250,600 1210,660 1100,695 1085,850 1090,950 1125,1165;
      A 545,1000 500,1040 390,1110 360,1200 E 355,90 290,200 200,260 100,330 36,470; B 760,100 900,90 1050,80 1110,30; D 580,30 700,110 800,240 860,330 1000,375 1180,460 1284,565`, 'curve') },
    { fill: '#f7d5a8', edge: '#bd9552', w: 11, d: trace(`A 1185,30 1160,110 1110,200 1030,290 930,430 870,570 830,740 780,920 765,1010 740,1055 640,1120 565,1170 E 560,60 590,170 630,290 668,430 640,560 622,700 640,850 560,1010 545,1165;
      A 1185,30 1290,230 B 30,330 130,520 210,590 250,670 340,750 410,940 640,925 820,905 1000,930 1100,965 1105,1080 1130,1165 1200,1190 1350,1175 C 35,1180 G 45,10 50,150; B 90,310 118,325 110,360 80,380;
      B 742,30 760,300 800,700 820,980 F 845,50 880,450 900,750 930,980 970,1165; C 868,30 880,110 930,190 1100,340 1200,450 1290,600 D 20,750 70,930 120,1040 230,1140 H 490,60 620,240 690,330 820,510 960,600 1150,780 1300,870 1446,950;
      H 400,200 410,130 490,50 D 470,1070 700,940 920,730 1200,470 1260,390 1284,240`, 'curve') },
    { fill: '#edb1a0', edge: '#c76a55', w: 13, d: trace(`A 36,490 110,440 290,300 400,170 500,90 610,25`, 'curve') },
    { fill: '#dc94a1', edge: '#ce5c84', w: 15, d: trace(`E 36,85 180,180 225,200 280,320 350,480 420,600 550,690 700,760 830,830 920,940 1000,1050 1100,1110 1170,1165; E 200,185 260,185; F 300,1170 500,1095 700,1050 900,1030 1100,1008 1200,1008 1290,1035 G 150,1090 340,1140 500,1080 760,920 960,840 1180,690 H 232,560 430,400 620,250 880,60 D 1050,950 1284,770;
      B 1205,30 1200,220 1240,450 1290,740 1340,1000 C 50,1110 110,1200 G 145,50 130,130 137,200 137,450 170,620 215,830 205,950 140,1040 30,1165;
      E 560,680 640,660 690,700 740,770 640,770 560,700; H 400,205 420,300 450,390 450,450 420,490 360,490; H 410,260 450,320 500,350; F 1290,1035 1260,1010 1300,1000 G 50,1080 60,1165; G 30,20 60,130 110,130; G 0,1030 60,1030 140,1040; F 1300,1060 1340,1165`, 'curve') }
  ];

  const rails = trace(`A 1140,30 1350,400 B 200,700 480,1190 F 590,200 570,450 520,800 480,1165; B 1180,30 1060,210 1000,400 990,700 992,1190 F 985,400 985,780 1060,980 1140,1165`, 'curve');
  const branch = trace(`B 640,30 645,950 620,1190 F 625,0 590,200`, 'curve');
  const sidings = trace(`B 360,110 500,110 540,150 550,200 640,300 660,330 740,350; B 540,100 540,150; B 545,230 590,240; B 680,195 645,220 640,300; F 1000,390 1100,420 1180,500 1250,625; F 1135,460 1135,700 1185,770; F 1020,420 1020,770 1060,840 1120,840; F 1050,830 1060,920; F 1060,860 1130,885; B 1000,1130 1030,1155 1080,1165; G 180,0 195,490; G 195,350 280,400; G 200,410 300,480; C 0,700 60,1050 150,1130 180,1200`, 'curve');
  const borders = trace(`C 240,30 265,280 265,500 250,800 250,950 290,1170 G 335,190 370,400 395,600 380,760 345,890; G 320,880 260,1030 180,1160; F 850,300 1000,370 1100,420 1280,570 G 60,650 200,770 320,880; E 145,130 190,80 300,140 350,190 320,320 390,310 440,420 470,470 540,500 610,440 740,310 780,260 840,250 880,360 980,270 1050,270 1100,300 1130,230 1310,140 F 60,205 160,215 235,195 270,130 400,195`, 'line');
  const tracks = trace(`H 1375,537 1240,540 1240,660 1230,700 1255,720 1275,715; C 100,405 210,390; C 75,495 155,495 110,560 65,555 65,600 0,595; C 120,500 125,540; C 175,420 170,480`, 'line');
  const greenway = trace(`H 820,520 775,590 715,745 640,775 600,825 560,820 550,830 590,860 585,920 568,1020 580,1080 590,1165`, 'curve');
  const footway = trace(`E 285,672 260,672 235,735 255,810 235,890`, 'curve');

  const trees = `C 450,365;C 610,490;C 765,600;C 570,720;C 625,885;C 750,985;C 605,1100;C 865,1115;C 850,815;C 405,190;C 630,300;C 800,225;C 370,970;C 990,965;G 535,95;G 370,180;G 420,350;G 430,550;G 450,735;G 805,585;G 805,790;G 605,860;G 400,950;G 720,105;G 570,1110;G 850,1160;G 1070,1155;D 275,755;D 400,640;B 250,365;B 390,490`
    .split(';').map((s) => points(s, 'A').list[0]);

  const names = [
    ['Hull Street Road', 'A 110,440 290,300 400,170 510,92', 'end'],
    ['Broad Rock Boulevard', 'A 835,742 850,650 880,530 930,430 985,345 1050,255'],
    ['East Belt Boulevard', 'A 1245,135 1300,240 B 30,330 75,420 150,545'],
    ['Warwick Road', 'A 1045,565 1130,655 1175,740 1225,860'],
    ['Hopkins Road', 'A 1270,690 1265,780 1255,850 1264,1040'],
    ['Iron Bridge Road', 'E 590,170 560,60 575,0 A 640,1120 770,1040'],
    ['Iron Bridge Road', 'E 657,480 635,560 622,660 622,760 634,900'],
    ['Hopkins Road', 'E 1248,630 1258,520 1265,430 1295,300'],
    ['Road', 'E 45,470 110,340'],
    ['Walmsley Boulevard', 'F 410,200 500,255 600,295 700,290 870,265'],
    ['Richmond Highway', 'B 747,155 757,300 768,420 790,640'],
    ['Richmond-Petersburg Turnpike', 'B 1207,245 1225,400 1260,600 1300,800 1340,1000'],
    ['Bells Road', 'B 1100,1105 1112,1160 1150,1190 1200,1192 1320,1180'],
    ['New Market Road', 'C 1255,560 1330,710 D 35,810 90,980'],
    ['New Market Road', 'H 1155,785 1300,870 1600,1030'],
    ['Darbytown Road', 'D 430,-50 580,30 700,115 790,225', 'end'],
    ['South Laburnum Avenue', 'D 470,1080 690,945 940,720'],
    ['Pocahontas Parkway', 'D 665,1235 1090,925'],
    ['Pocahontas Parkway', 'H 70,690 450,385'],
    ['Pocahontas Parkway', 'F 1270,1030 G 60,1070 200,1110 460,1150'],
    ['South Laburnum Avenue', 'D 1260,412 1284,300 1290,100']
  ].map(([text, path, end]) => ({ text, end, d: trace(path, 'curve') }));

  const places = [
    ['Henrico County', 'C 322,757 345,300', '#8d6b9e'],
    ['Richmond', 'C 190,960 255,1280', '#8d6b9e'],
    ['Richmond', 'E -120,-80 130,60', '#8d6b9e', 'end'],
    ['James River', 'C 170,-160 215,60 240,208', '#4d80b3', 'end']
  ].map(([text, path, color, end]) => ({ text, color, end, d: trace(path, 'curve') }));

  const exits = [['69', 2694, 512], ['69', 2727, 588], ['67', 2750, 824]];
  const shields = [
    { x: 1805, y: 601, w: 94, h: 34, cx: 1852, lines: ['SR 651'], kind: 'yellow' },
    { x: 1981, y: 637, w: 78, h: 34, cx: 2020, lines: ['VA 10'], kind: 'orange' },
    { x: 2037, y: 801, w: 92, h: 34, cx: 2083, lines: ['VA 150'], kind: 'pink' },
    { x: 2965, y: 787, w: 92, h: 34, cx: 3011, lines: ['VA 895'], kind: 'pink' },
    { x: 2465, y: 507, w: 105, h: 58, cx: 2517, lines: ['US 1', 'US 301'], kind: 'orange' },
    { x: 2485, y: 673, w: 91, h: 58, cx: 2531, lines: ['US 1', 'US 301'], kind: 'orange' }
  ];
</script>

<main class="page">
  <div class="previous"></div>
  <section class="card">
    <h2>Apparatus Details</h2>
    <div class="columns">
      <div class="details">
        <label class="line" for="apparatus">Apparatus</label>
        <div class="select">
          <select id="apparatus" bind:value={apparatus}><option>H3</option></select>
          <svg viewBox="0 0 28 18" aria-hidden="true"><path d="M3 3l11 11L25 3" /></svg>
        </div>
        <fieldset>
          <legend class="line">Unit Status</legend>
          {#each statuses as s}
            <label class="radio"><input type="radio" name="status" value={s} bind:group={status} /><span>{s}</span></label>
          {/each}
        </fieldset>
        <table>
          <colgroup><col class="c1" /><col class="c2" /><col class="c3" /><col class="c4" /><col /></colgroup>
          <thead><tr><th>ID</th><th>TYPE</th><th>SHIFT</th><th>STATION</th><th>CAR ID</th></tr></thead>
          <tbody>
            {#each units as u}
              <tr><td>{u.id}</td><td>{u.type}</td><td>{u.shift}</td><td>{u.station}</td><td>{u.car}</td></tr>
            {/each}
          </tbody>
        </table>
      </div>

      <div class="map">
        <svg class="tiles" viewBox="1812 150 1736 768" preserveAspectRatio="xMidYMid slice" role="img" aria-label="Street map">
          <rect x="1812" y="150" width="1736" height="768" fill="#f2efe9" />
          {#each areas as a}<path d={a.d} fill={a.fill} />{/each}
          {#each trees as [x, y]}
            <path class="tree" d="M{x - 5} {y - 8}l-5 12h9zm0 12v5M{x + 5} {y - 8}a4 5 0 1 0 .1 0zM{x + 5} {y + 2}v7" />
          {/each}
          <path class="footway" d={footway} />
          <path class="greenway" d={greenway} />
          <path class="track" d={tracks} />
          <g class="line-work">
            <path d={streets} stroke="#c9c8c8" stroke-width="4" />
            <path d={lane} stroke="#b9b9b9" stroke-width="5" />
            <path d={minor} stroke="#c2c2c2" stroke-width="8" />
            <path d={streets} stroke="#fff" stroke-width="3" />
            <path d={lane} stroke="#fff" stroke-width="4" />
            <path d={minor} stroke="#fff" stroke-width="6" />
            <path d={sidings} stroke="#adadad" stroke-width="3" />
            <path d={branch} stroke="#a9a9a9" stroke-width="5" />
            <path d={branch} stroke="#dedede" stroke-width="3" stroke-dasharray="14 14" />
            {#each roads as r}
              <path d={r.d} stroke={r.edge} stroke-width={r.w + 2} />
              <path d={r.d} stroke={r.fill} stroke-width={r.w} />
            {/each}
            <circle cx="2551" cy="875" r="19" fill="#dc94a1" stroke="#d97f98" stroke-width="1" />
            <path d="M2546 835L2551 870L2563 918" stroke="#f7d5a8" stroke-width="11" />
          </g>
          <path class="rail" d={rails} />
          <path class="ties" d={rails} />
          <path class="border" d={borders} />
          {#each names as n, i}
            <path id="name-{i}" d={n.d} fill="none" />
            <text class="road" dy="5"><textPath href="#name-{i}" startOffset={n.end ? '100%' : '0'} text-anchor={n.end ?? 'start'}>{n.text}</textPath></text>
          {/each}
          {#each places as p, i}
            <path id="place-{i}" d={p.d} fill="none" />
            <text class="place" dy="6" fill={p.color}><textPath href="#place-{i}" startOffset={p.end ? '100%' : '0'} text-anchor={p.end ?? 'start'}>{p.text}</textPath></text>
          {/each}
          <g class="plant">
            <text x="2628" y="463">Phillip</text><text x="2628" y="487">Morris</text>
            <text x="2630" y="734">DuPont</text><text x="2630" y="758">Spruance</text><text x="2630" y="782">Plant</text>
          </g>
          <text class="town" x="2516" y="837">Bensley</text>
          {#each exits as [n, x, y]}<text class="exit" {x} {y}>{n}</text>{/each}
          {#each shields as s}
            <g class="shield {s.kind}">
              <rect x={s.x} y={s.y} width={s.w} height={s.h} rx="3" />
              {#each s.lines as l, i}<text x={s.cx} y={s.y + 24 + i * 24}>{l}</text>{/each}
            </g>
          {/each}
        </svg>
        <div class="zoom">
          <button aria-label="Zoom in"><svg viewBox="0 0 26 26"><path d="M13 1v24M1 13h24" /></svg></button>
          <button aria-label="Zoom out"><svg viewBox="0 0 26 26"><path d="M1 13h24" /></svg></button>
        </div>
        <div class="credit">
          <svg viewBox="0 0 24 16" aria-hidden="true"><path fill="#5377df" d="M0 0h24v8H0z" /><path fill="#fbd74a" d="M0 8h24v8H0z" /><path fill="#d9bd45" d="M0 14h24v2H0z" /></svg>
          <a href="#leaflet">Leaflet</a> | © <a href="#osm">OpenStreetMap</a> contributors
        </div>
      </div>
    </div>
  </section>
  <div class="shade"></div>
</main>

<style>
  :global(body) { margin: 0; background: linear-gradient(90deg, #1f3d6e 50%, #5c3420 50%); }
  .page {
    position: relative;
    overflow: hidden;
    padding: 22px 10px 0 12px;
    border-radius: 0 0 10px 10px;
    background: #f7f9fb;
    font: 32px/48px Inter, sans-serif;
    color: #000;
  }
  .previous {
    position: absolute;
    top: -60px;
    left: 12px;
    width: 49%;
    height: 56px;
    border-radius: 12px;
    box-shadow: 0 4px 24px 4px rgba(0, 0, 0, 0.16);
  }
  .card {
    position: relative;
    padding: 32px 32px 30px;
    border-radius: 12px;
    background: #fff;
    box-shadow: 0 4px 16px rgba(0, 0, 0, 0.08);
  }
  h2 { margin: 0 0 32px; font-size: 48px; line-height: 64px; font-weight: 700; letter-spacing: -0.025em; }
  .columns { display: grid; grid-template-columns: 1fr 1fr; gap: 32px; }
  .line { display: block; padding: 0; line-height: 48px; }
  .select { position: relative; width: 167px; }
  select {
    display: block;
    appearance: none;
    box-sizing: border-box;
    width: 100%;
    height: 84px;
    padding: 0 60px 0 24px;
    border: 2px solid #6b7280;
    border-radius: 0;
    background: #fff;
    color: #000;
    font: inherit;
  }
  .select svg {
    position: absolute;
    right: 28px;
    top: 33px;
    width: 28px;
    height: 18px;
    fill: none;
    stroke: #6b7280;
    stroke-width: 3;
    stroke-linecap: round;
    stroke-linejoin: round;
    pointer-events: none;
  }
  fieldset { margin: 0 0 32px; padding: 0; border: 0; }
  .radio { display: flex; gap: 10px; height: 48px; }
  .radio input {
    appearance: none;
    box-sizing: border-box;
    width: 32px;
    height: 32px;
    margin: 12px 0 0;
    border: 2px solid #6b7280;
    border-radius: 50%;
    background: #fff;
  }
  .radio input:checked { border: 10px solid #3662e3; }
  table { width: 100%; border-collapse: collapse; table-layout: fixed; text-align: left; }
  th, td { padding: 0 2px; }
  thead { background: #f9fafb; color: #374151; }
  th { font-size: 24px; line-height: 36px; font-weight: 700; }
  td { color: #6b7280; font-size: 28px; line-height: 44px; }
  .c1 { width: 8.4%; }
  .c2 { width: 33.3%; }
  .c3 { width: 15.3%; }
  .c4 { width: 22%; }

  .map { position: relative; height: 768px; overflow: hidden; background: #ddd; }
  .tiles { display: block; width: 100%; height: 100%; font-family: "Noto Sans", sans-serif; }
  .line-work path { fill: none; stroke-linecap: butt; stroke-linejoin: round; }
  .tree { fill: none; stroke: #91b084; stroke-width: 1; }
  .footway { fill: none; stroke: #7474ed; stroke-width: 2; stroke-dasharray: 2 5; }
  .greenway { fill: none; stroke: #a9cba4; stroke-width: 9; stroke-linejoin: round; }
  .track { fill: none; stroke: #cdb88c; stroke-width: 2; stroke-dasharray: 9 8; }
  .rail { fill: none; stroke: #747474; stroke-width: 6; }
  .ties { fill: none; stroke: #d4d4d4; stroke-width: 2; stroke-dasharray: 10 14; }
  .border { fill: none; stroke: #8f6f9c; stroke-opacity: 0.6; stroke-width: 3; stroke-dasharray: 14 4 3 4; }
  text { paint-order: stroke; stroke-linejoin: round; }
  .road { font-size: 16px; fill: #3b3328; }
  .place { font-size: 20px; stroke: rgba(255, 255, 255, 0.6); stroke-width: 3px; }
  .plant { font-size: 20px; font-style: italic; fill: #7c5b7c; text-anchor: middle; stroke: rgba(255, 255, 255, 0.6); stroke-width: 3px; }
  .town { font-size: 22px; fill: #2e2e2e; text-anchor: middle; stroke: rgba(255, 255, 255, 0.7); stroke-width: 4px; }
  .exit { font-size: 18px; fill: #aa3d41; text-anchor: middle; stroke: #fff; stroke-width: 3px; }
  .shield { font-size: 20px; text-anchor: middle; }
  .shield rect { stroke-width: 2; }
  .yellow { fill: #666c3b; }
  .yellow rect { fill: #f0f2d6; stroke: #c9cd9f; }
  .orange { fill: #795d31; }
  .orange rect { fill: #f3e4d2; stroke: #d7bd9a; }
  .pink { fill: #783652; }
  .pink rect { fill: #e7cdd2; stroke: #d39aa8; }

  .zoom {
    position: absolute;
    top: 20px;
    left: 20px;
    border: 4px solid rgba(0, 0, 0, 0.2);
    border-radius: 8px;
    background-clip: padding-box;
  }
  .zoom button {
    display: grid;
    place-items: center;
    box-sizing: border-box;
    width: 60px;
    height: 60px;
    padding: 10px 0 0;
    border: 0;
    border-radius: 0 0 4px 4px;
    background: #fff;
  }
  .zoom button:first-child { border-bottom: 2px solid #ccc; border-radius: 4px 4px 0 0; }
  .zoom svg { width: 26px; height: 26px; stroke: #000; stroke-width: 5; }
  .credit {
    position: absolute;
    right: 0;
    bottom: 0;
    padding: 0 10px;
    background: rgba(255, 255, 255, 0.8);
    color: #333;
    font: 24px/34px "Liberation Sans", Arial, sans-serif;
    white-space: nowrap;
  }
  .credit svg { width: 24px; height: 16px; }
  .credit a { color: #2f7bab; text-decoration: none; }
  .shade {
    position: absolute;
    top: 100%;
    left: 36%;
    right: 36%;
    height: 80px;
    box-shadow: 0 0 80px 20px rgba(0, 0, 0, 0.2);
    pointer-events: none;
  }
</style>
